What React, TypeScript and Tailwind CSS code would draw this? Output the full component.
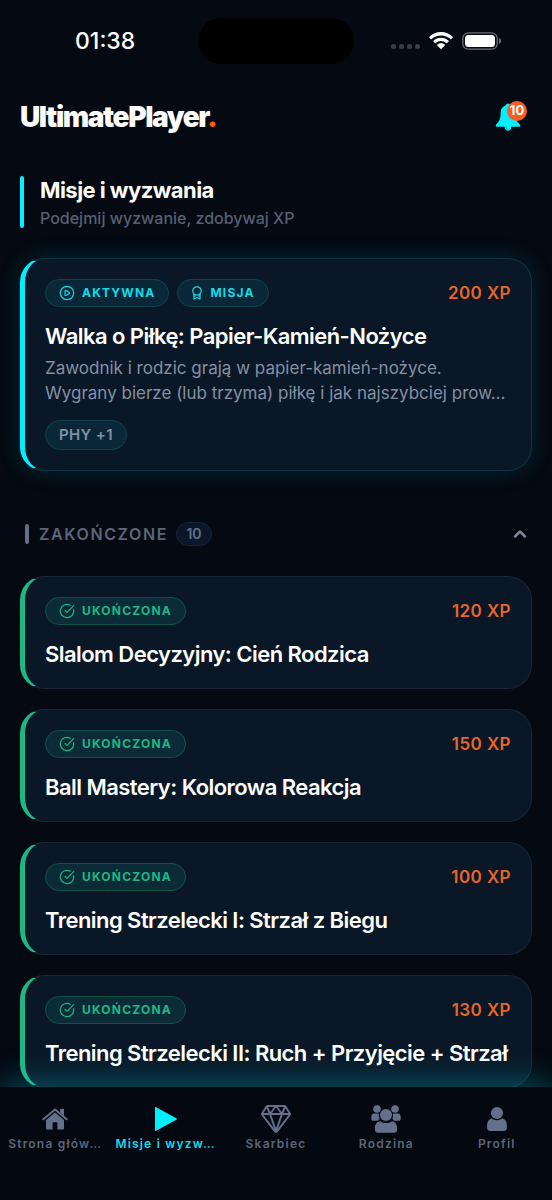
import { ChevronUp, CircleCheckBig, CirclePlay } from 'lucide-react'
import { IoDiamondOutline } from 'react-icons/io5'
import type { ReactNode } from 'react'

type Mission = { title: string; xp: number }

const completed: Mission[] = [
  { title: 'Slalom Decyzyjny: Cień Rodzica', xp: 120 },
  { title: 'Ball Mastery: Kolorowa Reakcja', xp: 150 },
  { title: 'Trening Strzelecki I: Strzał z Biegu', xp: 100 },
  { title: 'Trening Strzelecki II: Ruch + Przyjęcie + Strzał', xp: 130 },
]

function WifiIcon() {
  return (
    <svg width="24" height="18" viewBox="0 0 24 18" fill="white">
      <path d="M12 0C7.400 0 3.300 1.800.3 4.700c-.3.300-.3.600 0 .9l1.400 1.400c.3.300.6.300.9 0C5.100 4.700 8.400 3.400 12 3.400s6.900 1.300 9.400 3.600c.3.300.6.300.9 0l1.400-1.400c.3-.3.300-.6 0-.9C20.700 1.800 16.600 0 12 0Z" />
      <path d="M12 5.700c-2.900 0-5.600 1.100-7.600 3-.3.300-.3.600 0 .9l1.500 1.400c.2.300.6.300.9 0C8.200 9.700 10 9 12 9s3.800.7 5.200 2c.3.300.7.300.9 0l1.500-1.400c.3-.3.300-.6 0-.9-2-1.900-4.700-3-7.600-3Z" />
      <path d="M12 11.300c-1.400 0-2.700.5-3.700 1.300-.3.300-.3.600 0 .9l3.200 3.200c.3.300.7.300 1 0l3.200-3.200c.3-.3.300-.6 0-.9-1-.8-2.300-1.300-3.700-1.300Z" />
    </svg>
  )
}

function BatteryIcon() {
  return (
    <svg width="40" height="18" viewBox="0 0 40 18" fill="none">
      <rect x=".8" y=".8" width="34.400" height="16.400" rx="5.500" stroke="#6b6e78" strokeWidth="1.300" />
      <rect x="3" y="3" width="30" height="12" rx="3.500" fill="white" />
      <path d="M37 6v6c1.200-.4 2-1.600 2-3s-.8-2.600-2-3Z" fill="#6b6e78" />
    </svg>
  )
}

function BellIcon() {
  return (
    <svg width="26" height="28" viewBox="0 0 28 28" preserveAspectRatio="none" fill="#00f0ff">
      <path d="M14 .5c-1.200 0-2 .8-2.200 1.700C8.200 3.200 6.200 6 6.100 9.500c-.2 5.600-.8 8.300-4 11-1 .8-1.500 1.500-1.200 2.400.2.600.7.800 1.400.8h8c.3 2.400 1.600 4.100 3.700 4.100s3.400-1.700 3.700-4.100h8c.7 0 1.200-.2 1.400-.8.3-.9-.2-1.600-1.200-2.400-3.200-2.700-3.800-5.400-4-11-.1-3.500-2.100-6.300-5.700-7.300C16 1.300 15.200.5 14 .5Z" />
      <path d="M11.400 23.500c.2 1.700 1.300 2.700 2.600 2.700" fill="none" stroke="#0592a0" strokeWidth=".8" />
    </svg>
  )
}

function RibbonIcon() {
  return (
    <svg width="12" height="16" viewBox="1 0 12 16" fill="none" stroke="currentColor" strokeWidth="1.200" strokeLinejoin="round">
      <circle cx="7" cy="6" r="4.200" />
      <path d="M4 9v5l3-1.500 3 1.500V9" />
      <path d="M4 11.200h1.500M8.500 11.200H10" />
    </svg>
  )
}

function HouseIcon() {
  return (
    <svg width="26" height="24" viewBox="0 0 26 24" fill="currentColor">
      <path
        d="M1.300 12.300 13 2.500l11.700 9.800"
        fill="none"
        stroke="currentColor"
        strokeWidth="2"
        strokeLinecap="round"
        strokeLinejoin="round"
      />
      <path d="M18.200 2.600c0-.5.300-.8.800-.8h2.200c.5 0 .8.300.8.800v6.200l-3.800-3.200v-3Z" />
      <path d="M13 5.400 4 13v8.300c0 .8.500 1.200 1.200 1.200h5.400v-6.500c0-.5.300-.8.800-.8h3.200c.5 0 .8.300.8.800v6.500h5.400c.7 0 1.200-.4 1.200-1.200V13L13 5.400Z" />
    </svg>
  )
}

function PlayIcon() {
  return (
    <svg width="24" height="26" viewBox="0 0 24 26" fill="currentColor">
      <path d="M1 1.400v23.200c0 .4.400.6.700.4l21-11.600c.3-.2.300-.6 0-.8L1.700 1c-.3-.2-.7 0-.7.400Z" />
    </svg>
  )
}

function FamilyIcon() {
  return (
    <svg width="30" height="28" viewBox="0 0 30 28" fill="currentColor">
      <circle cx="6" cy="4" r="3.800" />
      <circle cx="24" cy="4" r="3.800" />
      <path d="M2.800 8.600h5.200a8 8 0 0 0 .6 5.100L7 15.800H2C.8 15.800.3 15 .3 14v-2c0-2 1-3.400 2.500-3.400ZM27.200 8.600H22a8 8 0 0 1-.6 5.100l1.600 2.100h5c1.200 0 1.700-.8 1.700-1.800v-2c0-2-1-3.400-2.500-3.400Z" />
      <circle cx="15" cy="10" r="6" />
      <path d="M9 16.200c1.600 1.200 3.700 1.900 6 1.900s4.400-.7 6-1.900c3 .4 5 3 5 6.300v2.800c0 1.500-1 2.500-2.500 2.500h-17C5 27.800 4 26.800 4 25.300v-2.800c0-3.300 2-5.900 5-6.300Z" />
    </svg>
  )
}

function PersonIcon() {
  return (
    <svg width="20" height="24" viewBox="0 0 20 24" fill="currentColor">
      <circle cx="10" cy="6" r="6" />
      <path d="M4.700 11.300C6 12.500 7.900 13.300 10 13.300s4-.8 5.300-2c2.900.9 4.600 3.500 4.600 7v2.400c0 2-1.200 3.200-3 3.200H3.100c-1.800 0-3-1.200-3-3.200v-2.400c0-3.500 1.700-6.100 4.600-7Z" />
    </svg>
  )
}

function StatusBar() {
  return (
    <div className="grid grid-cols-[1fr_156px_1fr] items-center pt-[18px]">
      <span className="pl-[75px] text-[23px] leading-[46px] font-medium">01:38</span>
      <div className="h-[46px] rounded-full bg-black" />
      <div className="flex items-center justify-end gap-[9px] pr-[50px]">
        <div className="mt-[10px] flex gap-[3px]">
          {[0, 1, 2, 3].map((dot) => (
            <span key={dot} className="size-[5px] rounded-full bg-[#3d4049]" />
          ))}
        </div>
        <WifiIcon />
        <BatteryIcon />
      </div>
    </div>
  )
}

function Badge({ tone, icon, children }: { tone: 'cyan' | 'green'; icon: ReactNode; children: ReactNode }) {
  const colors =
    tone === 'cyan'
      ? 'border-[#0b4450] bg-[#0a2737] text-[#12dbe9]'
      : 'border-[#115246] bg-[#0b2c36] text-[#1cb886]'
  return (
    <span className={`flex h-7 items-center gap-[7px] rounded-full border px-[13px] text-xs font-bold tracking-widest ${colors}`}>
      {icon}
      {children}
    </span>
  )
}

function Xp({ value }: { value: number }) {
  return <span className="ml-auto text-[17px] leading-7 font-semibold tracking-wide text-[#e8652a]">{value} XP</span>
}

function CompletedCard({ title, xp }: Mission) {
  return (
    <article className="rounded-3xl border border-l-[5px] border-[#1a2635] border-l-[#1db885] bg-[#0a1726] p-5">
      <div className="flex h-7 items-center">
        <Badge tone="green" icon={<CircleCheckBig className="size-4" strokeWidth={1.8} />}>
          UKOŃCZONA
        </Badge>
        <Xp value={xp} />
      </div>
      <h3 className="mt-4 truncate text-[22px] leading-[27px] font-semibold tracking-tight">{title}</h3>
    </article>
  )
}

const tabs = [
  { label: 'Strona głów…', icon: <HouseIcon /> },
  { label: 'Misje i wyzw…', icon: <PlayIcon />, active: true },
  { label: 'Skarbiec', icon: <IoDiamondOutline size={32} /> },
  { label: 'Rodzina', icon: <FamilyIcon /> },
  { label: 'Profil', icon: <PersonIcon /> },
]

export default function App() {
  return (
    <div className="flex h-screen flex-col bg-[#040912] font-[Inter,sans-serif] text-white">
      <StatusBar />

      <header className="flex items-center justify-between px-5 pt-[34px]">
        <h1 className="text-[28px] leading-[38px] font-black tracking-tighter">
          UltimatePlayer<span className="text-[#ff5a0a]">.</span>
        </h1>
        <button type="button" aria-label="Powiadomienia" className="relative mr-[11px]">
          <BellIcon />
          <span className="absolute -top-0.5 -right-[6px] flex size-5 items-center justify-center rounded-full bg-[#fb5c20] text-[13px] font-bold">
            10
          </span>
        </button>
      </header>

      <main className="min-h-0 flex-1 overflow-y-auto px-5 pt-10 [scrollbar-width:none]">
        <div className="flex gap-4">
          <div className="h-[52px] w-1 rounded-full bg-[#00f0ff]" />
          <div>
            <h2 className="text-[22px] leading-7 font-bold tracking-tight">Misje i wyzwania</h2>
            <p className="text-base leading-7 font-medium text-[#566072]">Podejmij wyzwanie, zdobywaj XP</p>
          </div>
        </div>

        <article className="mt-[26px] rounded-3xl border border-l-[5px] border-[#0c3543] border-l-[#00f0ff] bg-[#0a1726] p-5 shadow-[0_0_24px_rgba(0,240,255,0.14)]">
          <div className="flex h-7 items-center gap-2">
            <Badge tone="cyan" icon={<CirclePlay className="size-4" strokeWidth={1.8} />}>
              AKTYWNA
            </Badge>
            <Badge tone="cyan" icon={<RibbonIcon />}>
              MISJA
            </Badge>
            <Xp value={200} />
          </div>
          <h3 className="mt-4 text-[22px] leading-[27px] font-semibold tracking-tight">
            Walka o Piłkę: Papier-Kamień-Nożyce
          </h3>
          <p className="mt-[6px] text-[17px] leading-[25px] whitespace-nowrap text-[#8490a4]">
            Zawodnik i rodzic grają w papier-kamień-nożyce.
            <br />
            Wygrany bierze (lub trzyma) piłkę i jak najszybciej prow…
          </p>
          <div className="mt-[14px] flex">
            <span className="flex h-[30px] items-center rounded-full border border-[#0b4450] bg-[#0a2737] px-[13px] text-[15px] font-semibold tracking-wide text-[#8190a3]">
              PHY +1
            </span>
          </div>
        </article>

        <button type="button" className="mt-[51px] flex w-full items-center pl-[5px] text-left">
          <span className="h-5 w-1 rounded-xs bg-[#64708a]" />
          <span className="ml-[10px] text-base font-semibold tracking-widest text-[#5c6678]">ZAKOŃCZONE</span>
          <span className="ml-2 flex h-6 w-9 items-center justify-center rounded-full border border-[#14243a] bg-[#0b1728] text-sm font-semibold text-[#64708a]">
            10
          </span>
          <ChevronUp className="mr-[2px] ml-auto size-5 text-[#7b8598]" strokeWidth={3} />
        </button>

        <div className="mt-[30px] flex flex-col gap-5">
          {completed.map((mission) => (
            <CompletedCard key={mission.title} {...mission} />
          ))}
        </div>
      </main>

      <nav className="relative grid grid-cols-5 bg-[#040811] pt-4 pb-[47px] shadow-[0_-6px_30px_rgba(0,240,255,0.27)]">
        {tabs.map(({ label, icon, active }) => (
          <a
            key={label}
            href="#"
            className={`flex flex-col items-center ${active ? 'text-[#00f0ff]' : 'text-[#64708a]'}`}
          >
            <span className="flex h-8 items-center">{icon}</span>
            <span
              className={`text-xs leading-[18px] font-semibold tracking-widest whitespace-nowrap ${active ? 'text-[#12dbe9]' : 'text-[#5c6678]'}`}
            >
              {label}
            </span>
          </a>
        ))}
      </nav>
    </div>
  )
}
